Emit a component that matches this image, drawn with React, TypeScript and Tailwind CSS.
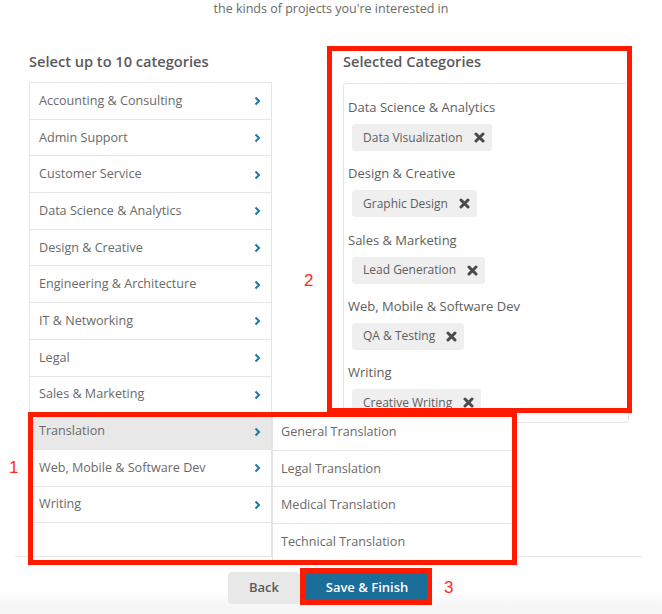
import React from "react";

const categories = [
  "Accounting & Consulting",
  "Admin Support",
  "Customer Service",
  "Data Science & Analytics",
  "Design & Creative",
  "Engineering & Architecture",
  "IT & Networking",
  "Legal",
  "Sales & Marketing",
  "Translation",
  "Web, Mobile & Software Dev",
  "Writing",
];

const sub = [
  "General Translation",
  "Legal Translation",
  "Medical Translation",
  "Technical Translation",
];

const selected: [string, string][] = [
  ["Data Science & Analytics", "Data Visualization"],
  ["Design & Creative", "Graphic Design"],
  ["Sales & Marketing", "Lead Generation"],
  ["Web, Mobile & Software Dev", "QA & Testing"],
  ["Writing", "Creative Writing"],
];

function Chevron() {
  return (
    <svg width="7" height="10" viewBox="0 0 7 10" className="shrink-0">
      <polyline
        points="1.5,1.5 5,5 1.5,8.5"
        fill="none"
        stroke="#1f78a4"
        strokeWidth="2"
      />
    </svg>
  );
}

function XIcon() {
  return (
    <svg width="11" height="11" viewBox="0 0 11 11" className="shrink-0">
      <path
        d="M2 2 L9 9 M9 2 L2 9"
        stroke="#4a4a4a"
        strokeWidth="3"
        strokeLinecap="round"
      />
    </svg>
  );
}

export default function App() {
  return (
    <div className="relative w-[662px] h-[614px] overflow-hidden bg-[linear-gradient(to_bottom,#ffffff_0px,#ffffff_592px,#f6f6f6_606px)] font-['Open_Sans',sans-serif] text-[#6a6a6a]">
      <p className="text-center text-[12.5px] leading-[18px] text-[#6a6a6a]">
        the kinds of projects you're interested in
      </p>

      <div className="mt-[33px] flex items-start pl-[29px]">
        {/* Left column */}
        <div className="w-[243px]">
          <h2 className="text-[14.6px] leading-[20px] font-semibold text-[#5a5a5a]">
            Select up to 10 categories
          </h2>
          <div className="relative mt-[11px] h-[474px] border-x border-t border-[#e4e4e4]">
            {categories.map((c) => (
              <div
                key={c}
                className={
                  "flex h-[36.7px] items-center justify-between border-b border-[#e6e6e6] pl-[9px] pr-[10px] pt-[1px] text-[12.6px] " +
                  (c === "Translation" ? "bg-[#e8e8e8]" : "bg-white")
                }
              >
                <span>{c}</span>
                <Chevron />
              </div>
            ))}
            {/* Flyout submenu */}
            <div className="absolute left-[242px] top-[330px] z-10 w-[241px] border-x border-t border-[#e4e4e4] bg-white">
              {sub.map((s) => (
                <div
                  key={s}
                  className="flex h-[36.7px] items-center border-b border-[#e4e4e4] pl-[8px] pt-[1px] text-[12.6px]"
                >
                  {s}
                </div>
              ))}
            </div>
          </div>
        </div>

        {/* Right column */}
        <div className="ml-[71px] w-[286px]">
          <h2 className="text-[14.6px] leading-[20px] font-semibold text-[#5a5a5a]">
            Selected Categories
          </h2>
          <div className="mt-[12px] h-[340px] overflow-hidden rounded-[3px] border border-[#e4e4e4] pl-[4px] pt-[14px]">
            <div className="flex flex-col gap-[13.3px]">
              {selected.map(([g, item]) => (
                <div key={g}>
                  <div className="text-[13px] leading-[18px] text-[#5e5e5e]">
                    {g}
                  </div>
                  <div className="mt-[8px] ml-[4px] inline-flex h-[27px] items-center rounded-[3px] bg-[#efefef] pl-[11px] pr-[7px] text-[12px] text-[#5e5e5e]">
                    <span>{item}</span>
                    <span className="ml-[11px] flex">
                      <XIcon />
                    </span>
                  </div>
                </div>
              ))}
            </div>
          </div>
        </div>
      </div>

      {/* Footer */}
      <div className="mx-[15px] w-[628px] border-t border-[#e6e6e6] pt-[15px]">
        <div className="flex justify-center gap-[4px]">
          <button className="h-[32px] w-[72px] rounded-[4px] bg-[#e8e8e8] text-[13px] font-semibold text-[#5a5a5a]">
            Back
          </button>
          <button className="h-[32px] w-[126px] rounded-[4px] bg-[#1c6e9a] text-[13px] font-semibold text-white">
            Save &amp; Finish
          </button>
        </div>
      </div>

      {/* Annotation overlays */}
      <div className="pointer-events-none absolute left-[327px] top-[46px] z-20 h-[367px] w-[305px] border-[5px] border-[#ff1a00]" />
      <div className="pointer-events-none absolute left-[28px] top-[412px] z-20 h-[153px] w-[489px] border-[5px] border-[#ff1a00]" />
      <div className="pointer-events-none absolute left-[300px] top-[568px] z-20 h-[37px] w-[132px] border-[5px] border-[#ff1a00]" />
      <span className="pointer-events-none absolute left-[9px] top-[458px] z-20 font-['Liberation_Sans',sans-serif] text-[17px] leading-[20px] text-[#ff2a1a]">
        1
      </span>
      <span className="pointer-events-none absolute left-[304px] top-[271px] z-20 font-['Liberation_Sans',sans-serif] text-[17px] leading-[20px] text-[#ff2a1a]">
        2
      </span>
      <span className="pointer-events-none absolute left-[444px] top-[578px] z-20 font-['Liberation_Sans',sans-serif] text-[17px] leading-[20px] text-[#ff2a1a]">
        3
      </span>
    </div>
  );
}
